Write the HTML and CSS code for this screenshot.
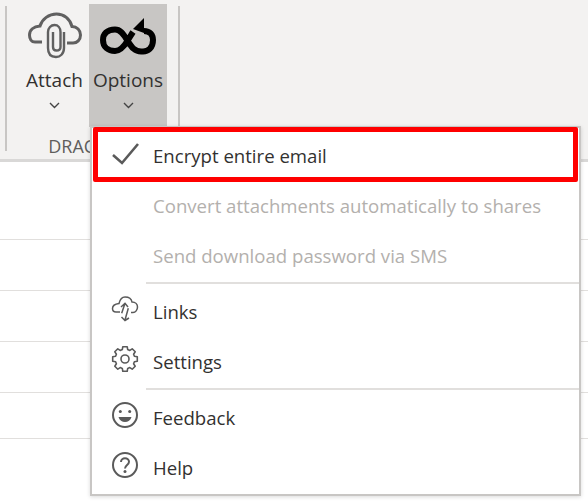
FILE: index.html
```html
<!DOCTYPE html>
<html lang="en">
<head>
    <meta charset="UTF-8">
    <title>DRACOON options</title>
    <link rel="stylesheet" href="styles.css">
</head>
<body>

    <div class="ribbon">
        <div class="sep"></div>
        <div class="group">
            <div class="buttons">
                <div class="rbtn attach">
                    <svg class="ricon" width="54" height="50" viewBox="0 0 54 50" fill="none" stroke="#606060" stroke-width="3">
                        <path d="M14 30H7C3.500 30 1.500 27 1.500 23C1.500 18 5.500 14.500 12 14C14 7 21 2 28.500 2C36 2 42 7 44 14.500C49 14.500 52.500 18.500 52.500 23C52.500 28 49 31 45 31H39"/>
                        <path d="M36 20V36C36 42 32 45 28 45C23 45 20 42 20 36V20C20 16 23 13 26.500 13C30 13 32.500 16 32.500 20V35C32.500 37 31 38.500 28.500 38.500C26 38.500 25 37 25 35V20" stroke-width="2.400"/>
                    </svg>
                    <span class="rlabel">Attach</span>
                    <svg class="chev" width="11" height="7" viewBox="0 0 11 7" fill="none" stroke="#444" stroke-width="1.400"><path d="M1 1L5.500 5.500L10 1"/></svg>
                </div>
                <div class="rbtn options">
                    <svg class="ricon" width="56" height="50" viewBox="0 0 56 50" fill="none" stroke="#000" stroke-width="6">
                        <path d="M44 19C50 19 53 23 53 28C53 36 48 40 42 39.500C34 40 31 34 27 28C23 21 20 17.500 15 17.500C7 17.500 3 22 3 28C3 35 8 39 15 39C21 39 25 33 28 28C30 25 31 23 33 20"/>
                        <path d="M44 6L33 17L44 21Z" fill="#000" stroke="none"/>
                    </svg>
                    <span class="rlabel">Options</span>
                    <svg class="chev" width="11" height="7" viewBox="0 0 11 7" fill="none" stroke="#444" stroke-width="1.400"><path d="M1 1L5.500 5.500L10 1"/></svg>
                </div>
            </div>
            <div class="group-name">DRACOON</div>
        </div>
        <div class="sep"></div>
    </div>

    <div class="rows">
        <div class="row first"></div>
        <div class="row"></div>
        <div class="row"></div>
        <div class="row"></div>
        <div class="row"></div>
        <div class="row last"></div>
    </div>

    <div class="menu">
        <div class="item">
            <svg width="28" height="28" viewBox="0 0 28 28" fill="none" stroke="#5a5a5a" stroke-width="2.600"><path d="M2 16L11 24L27 5"/></svg>
            <span>Encrypt entire email</span>
        </div>
        <div class="item disabled"><span class="noicon"></span><span>Convert attachments automatically to shares</span></div>
        <div class="item disabled"><span class="noicon"></span><span>Send download password via SMS</span></div>
        <div class="divider"></div>
        <div class="item">
            <svg width="28" height="28" viewBox="0 0 28 28" fill="none" stroke="#5a5a5a" stroke-width="1.500">
                <path d="M9 17H5C3 17 1.500 15.500 1.500 13.500C1.500 11 3.500 9 8 8.500C9 4.500 11 2 14 2C18 2 20.500 4 21 7C24.500 7 26.500 9.500 26.500 12C26.500 15 24.500 17.500 22 17.500H20"/>
                <path d="M10.700 18.300L14 8.300M10 12L14 8.300L17 12"/>
                <path d="M17.300 13.300L14 25M10.500 22L14 25.500L18 23"/>
            </svg>
            <span>Links</span>
        </div>
        <div class="item">
            <svg width="28" height="28" viewBox="0 0 28 28" fill="none" stroke="#5a5a5a" stroke-width="1.600">
                <path stroke-linejoin="round" d="M26.300 16.200L23.400 16.700L22.600 18.800L24.200 21.200L21.200 24.200L18.800 22.600L16.700 23.400L16.200 26.300H11.800L11.300 23.400L9.200 22.600L6.800 24.200L3.800 21.200L5.400 18.800L4.600 16.700L1.700 16.200V11.800L4.600 11.300L5.400 9.200L3.800 6.800L6.800 3.800L9.200 5.400L11.300 4.600L11.800 1.700H16.200L16.700 4.600L18.800 5.400L21.200 3.800L24.200 6.800L22.600 9.200L23.400 11.300L26.300 11.800Z"/>
                <circle cx="14" cy="14" r="4"/>
            </svg>
            <span>Settings</span>
        </div>
        <div class="divider"></div>
        <div class="item">
            <svg width="28" height="28" viewBox="0 0 28 28" fill="none" stroke="#5a5a5a" stroke-width="2">
                <circle cx="14" cy="14" r="12"/>
                <circle cx="9.300" cy="10.500" r="1.500" fill="#5a5a5a" stroke="none"/>
                <circle cx="18.700" cy="10.500" r="1.500" fill="#5a5a5a" stroke="none"/>
                <path d="M7.500 16H20.500C19.500 19.500 17 21 14 21C11 21 8.500 19.500 7.500 16Z" fill="#5a5a5a" stroke="none"/>
            </svg>
            <span>Feedback</span>
        </div>
        <div class="item">
            <svg width="28" height="28" viewBox="0 0 28 28" fill="none" stroke="#5a5a5a" stroke-width="2">
                <circle cx="14" cy="14" r="12"/>
                <path d="M10 11C10 8.500 12 7.200 14 7.200C16.200 7.200 18 8.700 18 10.800C18 14 14 14 14 17.500"/>
                <circle cx="14" cy="20.500" r="1.500" fill="#5a5a5a" stroke="none"/>
            </svg>
            <span>Help</span>
        </div>
        <div class="redbox"></div>
    </div>

</body>
</html>
```

FILE: styles.css
```css
* { margin: 0; padding: 0; box-sizing: border-box; }
body { background: white; font-family: 'Open Sans', 'Noto Sans', sans-serif; height: 504px; overflow: hidden; position: relative; }

.ribbon { display: flex; height: 162px; padding: 4px 0 8px 5px; background: #f3f2f1; border-bottom: 3px solid #d9d8d7; }
.sep { width: 2px; margin-top: 2px; background: #c8c6c4; }
.group { width: 171px; display: flex; flex-direction: column; }
.buttons { display: flex; gap: 2px; padding-left: 15px; }
.rbtn { display: flex; flex-direction: column; align-items: center; height: 123px; padding-top: 8px; }
.attach { width: 65px; }
.options { width: 78px; background: #c8c6c4; }
.ricon { height: 50px; }
.rlabel { font-size: 19px; line-height: 24px; margin-top: 6px; color: #323130; }
.chev { margin-top: 10px; }
.group-name { font-size: 18px; line-height: 22px; color: #605e5c; text-align: center; margin-top: 8px; }

.rows { padding-top: 26px; }
.row { height: 51px; border-bottom: 1px solid #e1dfdd; }
.row.first { height: 1px; border: none; }
.row.last { height: 46px; }

.menu { position: absolute; left: 90px; top: 126px; width: 491px; height: 370px; padding-top: 2px; background: white; border: 2px solid #c8c6c4; box-shadow: 0 1px 4px rgba(0, 0, 0, 0.15); }
.item { display: flex; align-items: center; gap: 14px; height: 50px; padding-left: 19px; font-size: 18.6px; color: #323130; }
.item svg { margin-bottom: 4px; }
.item.disabled { color: #b3b0ad; }
.noicon { width: 28px; }
.divider { height: 2px; margin: 2px 0 2px 54px; background: #e1dfdd; }
.redbox { position: absolute; left: 1px; top: -1px; width: 485px; height: 55px; border: 5px solid #ff0000; border-radius: 2px; }
```
